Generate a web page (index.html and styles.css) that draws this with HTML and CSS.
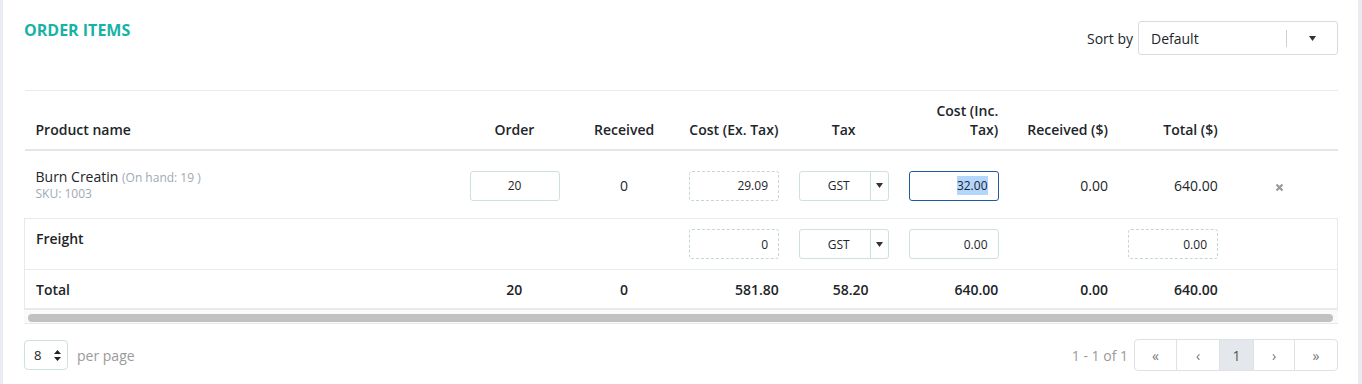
FILE: index.html
```html
<!DOCTYPE html>
<html lang="en">
<head>
  <meta charset="UTF-8">
  <meta name="viewport" content="width=device-width, initial-scale=1.0">
  <title>Order Items</title>
  <link rel="stylesheet" href="styles.css">
</head>
<body>
  <div class="card">
    <div class="card-header">
      <h2 class="title">ORDER ITEMS</h2>
      <div class="sort">
        <span class="sort-label">Sort by</span>
        <div class="sort-select">
          <span class="sort-value">Default</span>
          <span class="sort-sep"></span>
          <span class="sort-caret">
            <svg width="7" height="5" viewBox="0 0 7 5"><path d="M0 0h7L3.5 5z" fill="#333"/></svg>
          </span>
        </div>
      </div>
    </div>

    <table class="items">
      <colgroup>
        <col>
        <col class="col-num">
        <col class="col-num">
        <col class="col-num">
        <col class="col-num">
        <col class="col-num">
        <col class="col-num">
        <col class="col-num">
        <col class="col-num">
      </colgroup>
      <thead>
        <tr>
          <th class="name">Product name</th>
          <th class="c">Order</th>
          <th class="c">Received</th>
          <th class="c">Cost (Ex. Tax)</th>
          <th class="c">Tax</th>
          <th class="r">Cost (Inc. Tax)</th>
          <th class="r">Received ($)</th>
          <th class="r">Total ($)</th>
          <th></th>
        </tr>
      </thead>
      <tbody>
        <tr>
          <td class="name">
            <div class="product">Burn Creatin <span class="muted">(On hand: 19 )</span></div>
            <div class="sku">SKU: 1003</div>
          </td>
          <td><div class="field center">20</div></td>
          <td class="c">0</td>
          <td><div class="field dashed num">29.09</div></td>
          <td>
            <div class="tax-select">
              <span class="tax-value">GST</span>
              <span class="tax-caret"><svg width="7" height="5" viewBox="0 0 7 5"><path d="M0 0h7L3.5 5z" fill="#333"/></svg></span>
            </div>
          </td>
          <td><div class="field num focus"><span class="selected">32.00</span></div></td>
          <td class="r">0.00</td>
          <td class="r">640.00</td>
          <td class="c">
            <svg class="remove" width="9" height="9" viewBox="0 0 9 9"><path d="M1.5 1.5l6 6M7.5 1.5l-6 6" stroke="#9a9a9a" stroke-width="2.2"/></svg>
          </td>
        </tr>
      </tbody>
      <tfoot>
        <tr class="freight">
          <td class="name strong">Freight</td>
          <td></td>
          <td></td>
          <td><div class="field dashed num">0</div></td>
          <td>
            <div class="tax-select">
              <span class="tax-value">GST</span>
              <span class="tax-caret"><svg width="7" height="5" viewBox="0 0 7 5"><path d="M0 0h7L3.5 5z" fill="#333"/></svg></span>
            </div>
          </td>
          <td><div class="field num">0.00</div></td>
          <td></td>
          <td><div class="field dashed num">0.00</div></td>
          <td class="last"></td>
        </tr>
        <tr class="total">
          <td class="name">Total</td>
          <td class="c">20</td>
          <td class="c">0</td>
          <td class="r">581.80</td>
          <td class="c tax-total">58.20</td>
          <td class="r">640.00</td>
          <td class="r">0.00</td>
          <td class="r">640.00</td>
          <td class="last"></td>
        </tr>
      </tfoot>
    </table>
    <div class="scrollbar"><div class="thumb"></div></div>

    <div class="pager">
      <div class="per-page">
        <div class="size-select">
          <span>8</span>
          <svg width="7" height="11" viewBox="0 0 7 11"><path d="M3.5 0L7 4H0z M0 7h7L3.5 11z" fill="#222"/></svg>
        </div>
        <span class="muted-label">per page</span>
      </div>
      <div class="pages">
        <span class="muted-label">1 - 1 of 1</span>
        <div class="page-buttons">
          <span class="page-btn">&laquo;</span>
          <span class="page-btn wide">&lsaquo;</span>
          <span class="page-btn active">1</span>
          <span class="page-btn">&rsaquo;</span>
          <span class="page-btn wide">&raquo;</span>
        </div>
      </div>
    </div>
  </div>
</body>
</html>
```

FILE: styles.css
```css
body {
  margin: 0;
  background-color: #e9ecf1;
  font-family: "Open Sans", Arial, sans-serif;
  color: #212529;
}

.card {
  margin-left: 3px;
  width: 1355px;
  height: 384px;
  box-sizing: border-box;
  padding: 21px 20px 0 21px;
  background-color: #ffffff;
}

.card-header {
  display: flex;
  justify-content: space-between;
  align-items: flex-start;
  height: 35px;
  margin-bottom: 34px;
}

.title {
  margin: 0;
  font-size: 16px;
  line-height: 18px;
  font-weight: 700;
  color: #17b2a6;
}

.sort {
  display: flex;
  align-items: center;
  gap: 5px;
  font-size: 14px;
}

.sort-select {
  display: flex;
  align-items: center;
  width: 200px;
  height: 34px;
  box-sizing: border-box;
  padding-left: 12px;
  border: 1px solid #d6dde2;
  border-radius: 3px;
}

.sort-sep {
  margin-left: auto;
  width: 1px;
  height: 17px;
  background-color: #d0d0d0;
}

.sort-caret {
  display: flex;
  justify-content: center;
  width: 50px;
}

.items {
  width: 100%;
  border-collapse: collapse;
  table-layout: fixed;
  border-top: 1px solid #e6e9ed;
}

.col-num {
  width: 109.75px;
}

.items th {
  padding: 10px;
  font-size: 14px;
  line-height: 19px;
  font-weight: 600;
  vertical-align: bottom;
  border-bottom: 2px solid #e2e6ea;
}

.items td {
  padding: 0 10px;
  font-size: 14px;
  line-height: 19px;
  vertical-align: middle;
}

.items tbody td {
  padding-top: 18px;
  padding-bottom: 16px;
  border-bottom: 1px solid #e6e9ed;
}

.items .name {
  padding-left: 11px;
  text-align: left;
}

.c {
  text-align: center;
}

.r {
  text-align: right;
}

.product {
  line-height: 16px;
  font-size: 14px;
}

.muted {
  font-size: 12px;
  color: #a0a9b4;
}

.sku {
  line-height: 16px;
  font-size: 12px;
  color: #a0a9b4;
}

.field {
  display: flex;
  align-items: center;
  width: 90px;
  height: 30px;
  box-sizing: border-box;
  padding: 0 10px;
  border: 1px solid #cfe0de;
  border-radius: 3px;
  font-size: 12px;
}

.field.center {
  justify-content: center;
}

.field.num {
  justify-content: flex-end;
}

.field.dashed {
  border-style: dashed;
  border-color: #c3d8d5;
}

.field.focus {
  border-color: #1f5a9e;
}

.selected {
  background-color: #b4d5fc;
}

.tax-select {
  display: flex;
  width: 90px;
  height: 30px;
  box-sizing: border-box;
  border: 1px solid #cfe0de;
  border-radius: 3px;
  font-size: 12px;
}

.tax-value {
  flex: 1;
  display: flex;
  align-items: center;
  justify-content: center;
  padding-left: 8px;
  border-right: 1px solid #cfe0de;
}

.tax-caret {
  display: flex;
  align-items: center;
  justify-content: center;
  width: 17px;
}

.remove {
  vertical-align: middle;
  margin-right: 6px;
}

.items tfoot td {
  border-bottom: 1px solid #e6e9ed;
}

.items tfoot .name {
  border-left: 1px solid #e6e9ed;
}

.items tfoot .last {
  border-right: 1px solid #e6e9ed;
}

.freight td {
  padding-top: 10px;
  padding-bottom: 10px;
  vertical-align: top;
}

.freight .strong,
.total td {
  font-weight: 600;
  font-size: 14px;
}

.total td {
  padding-top: 10px;
  padding-bottom: 9px;
}

.items tfoot .total td {
  border-bottom: 2px solid #e6e9ed;
}

.total .tax-total {
  padding-left: 24px;
}

.scrollbar {
  height: 14px;
  padding: 4px 5px 0 4px;
  box-sizing: border-box;
  background-color: #fafafa;
  border-bottom: 1px solid #e8e8e8;
}

.thumb {
  height: 8px;
  border-radius: 4px;
  background-color: #c1c1c1;
}

.pager {
  display: flex;
  justify-content: space-between;
  align-items: center;
  margin-top: 15px;
}

.per-page,
.pages {
  display: flex;
  align-items: center;
}

.size-select {
  display: flex;
  align-items: center;
  justify-content: space-between;
  width: 44px;
  height: 30px;
  box-sizing: border-box;
  padding: 0 6px 0 9px;
  border: 1px solid #cfe0de;
  border-radius: 4px;
  font-size: 13px;
}

.muted-label {
  font-size: 14px;
  color: #9a9a9a;
}

.per-page .muted-label {
  margin-left: 9px;
}

.pages .muted-label {
  margin-right: 6px;
}

.page-buttons {
  display: flex;
  height: 32px;
  box-sizing: border-box;
  border: 1px solid #dee2e6;
  border-radius: 4px;
}

.page-btn {
  display: flex;
  align-items: center;
  justify-content: center;
  width: 41px;
  box-sizing: border-box;
  font-size: 14px;
  color: #777;
  border-left: 1px solid #dee2e6;
}

.page-btn:first-child {
  border-left: none;
}

.page-btn.wide {
  width: 43px;
}

.page-btn.active {
  width: 34px;
  color: #555;
  background-color: #e4e7eb;
}
```
